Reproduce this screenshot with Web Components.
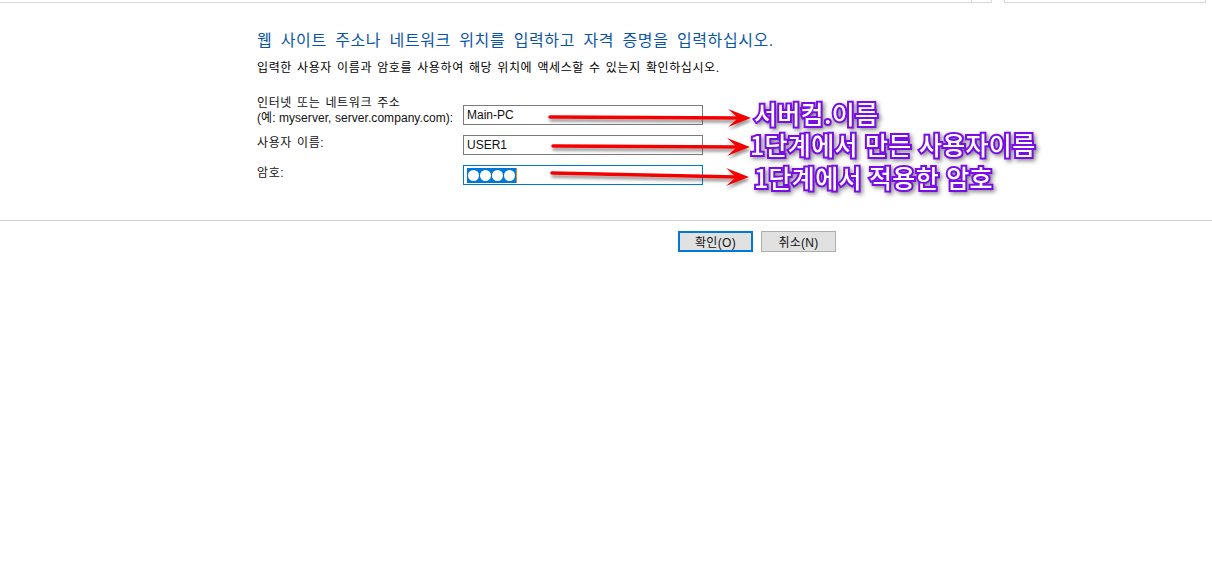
<!DOCTYPE html>
<html lang="ko">
<head>
<meta charset="utf-8">
<title>자격 증명</title>
<style>
  html, body { margin: 0; padding: 0; background: #fff; }
  body { font-family: "Liberation Sans", "Noto Sans CJK KR", sans-serif; width: 1212px; height: 566px; overflow: hidden; position: relative; }
  .ko { letter-spacing: .6px; word-spacing: 1.2px; }
  .lat { letter-spacing: .06px; }
</style>
</head>
<body>
<top-strip></top-strip>
<cred-dialog>
  <span slot="title">웹 사이트 주소나 네트워크 위치를 입력하고 자격 증명을 입력하십시오.</span>
  <span slot="hint">입력한 사용자 이름과 암호를 사용하여 해당 위치에 액세스할 수 있는지 확인하십시오.</span>
  <cred-field slot="fields" value="Main-PC"><span class="ko">인터넷 또는 네트워크 주소</span><br><span class="lat">(예: myserver, server.company.com):</span></cred-field>
  <cred-field slot="fields" value="USER1"><span class="ko">사용자 이름:</span></cred-field>
  <cred-field slot="fields" secret><span class="ko">암호:</span></cred-field>
  <dlg-button slot="buttons" primary>확인(O)</dlg-button>
  <dlg-button slot="buttons">취소(N)</dlg-button>
</cred-dialog>
<arrow-note x1="550" y1="117" x2="751" y2="118" tx="754" ty="99">서버컴.이름</arrow-note>
<arrow-note x1="553" y1="146" x2="750" y2="147" tx="750" ty="130">1단계에서 만든 사용자이름</arrow-note>
<arrow-note x1="552" y1="173" x2="749" y2="177" tx="754" ty="163">1단계에서 적용한 암호</arrow-note>

<script>
class TopStrip extends HTMLElement {
  connectedCallback() {
    this.attachShadow({ mode: 'open' });
    this.shadowRoot.innerHTML = `
      <style>
        :host { display: flex; height: 3px; }
        .left { width: 992px; box-sizing: border-box; border-bottom: 1px solid #d9d9d9; border-right: 1px solid #d9d9d9; display: flex; justify-content: flex-end; }
        .left i { width: 19px; border-left: 1px solid #d9d9d9; }
        .right { width: 202px; box-sizing: border-box; margin-left: 12px; border: 1px solid #d9d9d9; border-top: 0; }
      </style>
      <div class="left"><i></i></div>
      <div class="right"></div>
    `;
  }
}

class CredDialog extends HTMLElement {
  connectedCallback() {
    this.attachShadow({ mode: 'open' });
    this.shadowRoot.innerHTML = `
      <style>
        :host { display: block; }
        .body { padding: 27px 0 0 257px; height: 218px; box-sizing: border-box; border-bottom: 1px solid #d0d0d0; }
        .title { color: #0a55a8; font-size: 16px; line-height: 22px; letter-spacing: .6px; word-spacing: 3.4px; white-space: nowrap; }
        .hint { color: #000; font-size: 12px; line-height: 18px; margin-top: 7px; letter-spacing: .6px; word-spacing: 1.2px; white-space: nowrap; }
        .fields { display: flex; flex-direction: column; gap: 10px; margin-top: 18px; }
        .buttons { display: flex; gap: 8px; padding: 10px 0 0 678px; }
      </style>
      <div class="body">
        <div class="title"><slot name="title"></slot></div>
        <div class="hint"><slot name="hint"></slot></div>
        <div class="fields"><slot name="fields"></slot></div>
      </div>
      <div class="buttons"><slot name="buttons"></slot></div>
    `;
  }
}

class CredField extends HTMLElement {
  connectedCallback() {
    const secret = this.hasAttribute('secret');
    const value = this.getAttribute('value') || '';
    this.attachShadow({ mode: 'open' });
    this.shadowRoot.innerHTML = `
      <style>
        :host { display: flex; align-items: flex-start; font-size: 12px; color: #111; }
        .label { width: 206px; line-height: 15px; padding-top: 1px; margin-bottom: -1px; box-sizing: border-box; white-space: nowrap; }
        .box { width: 240px; height: 20px; align-self: flex-end; box-sizing: border-box; border: 1px solid #7a7a7a; padding: 0 3px; display: flex; align-items: center; background: #fff; }
        :host([secret]) .box { border-color: #0078d7; }
        .sel { display: flex; gap: 1px; background: #0078d7; height: 15px; align-items: center; padding: 0 1px; border-right: 1px solid #e8862a; }
        .sel i { width: 11px; height: 11px; border-radius: 50%; background: #fff; }
      </style>
      <div class="label"><slot></slot></div>
      <div class="box">${secret ? '<div class="sel"><i></i><i></i><i></i><i></i></div>' : value}</div>
    `;
  }
}

class DlgButton extends HTMLElement {
  connectedCallback() {
    this.attachShadow({ mode: 'open' });
    this.shadowRoot.innerHTML = `
      <style>
        :host { display: flex; width: 75px; height: 21px; box-sizing: border-box; align-items: center; justify-content: center; background: #e1e1e1; border: 1px solid #adadad; font-size: 12px; letter-spacing: .3px; color: #111; white-space: nowrap; }
        :host([primary]) { border: 2px solid #0078d7; }
      </style>
      <slot></slot>
    `;
  }
}

// annotation drawn over the screenshot: red arrow plus glowing purple label
class ArrowNote extends HTMLElement {
  connectedCallback() {
    const a = n => Number(this.getAttribute(n));
    const x1 = a('x1'), y1 = a('y1'), x2 = a('x2'), y2 = a('y2');
    const id = 's' + x1;
    this.attachShadow({ mode: 'open' });
    this.shadowRoot.innerHTML = `
      <style>
        :host { display: block; }
        svg { position: absolute; left: 0; top: 0; pointer-events: none; }
        .txt {
          position: absolute; left: ${a('tx')}px; top: ${a('ty')}px; white-space: nowrap;
          font-family: "Noto Sans CJK KR", sans-serif;
          font-size: 25px; line-height: 28px; letter-spacing: .3px; font-weight: 500; color: #fff;
          -webkit-text-stroke: 4px #7a0ce6; paint-order: stroke fill;
          filter: drop-shadow(2px 2px 2px rgba(60, 60, 60, .6));
        }
      </style>
      <svg width="1212" height="566">
        <defs><filter id="${id}" x="-10%" y="-200%" width="120%" height="500%"><feDropShadow dx="1" dy="3" stdDeviation="1.5" flood-color="#444" flood-opacity=".55"/></filter></defs>
        <g filter="url(#${id})" fill="#f40000">
          <path d="M${x1} ${y1} L${x2 - 13} ${y2} " stroke="#f40000" stroke-width="3.5" stroke-linecap="round"/>
          <path d="M${x2} ${y2} L${x2 - 23} ${y2 - 9} L${x2 - 13} ${y2} L${x2 - 23} ${y2 + 9} Z"/>
        </g>
      </svg>
      <div class="txt"><slot></slot></div>
    `;
  }
}

customElements.define('top-strip', TopStrip);
customElements.define('cred-dialog', CredDialog);
customElements.define('cred-field', CredField);
customElements.define('dlg-button', DlgButton);
customElements.define('arrow-note', ArrowNote);
</script>
</body>
</html>
